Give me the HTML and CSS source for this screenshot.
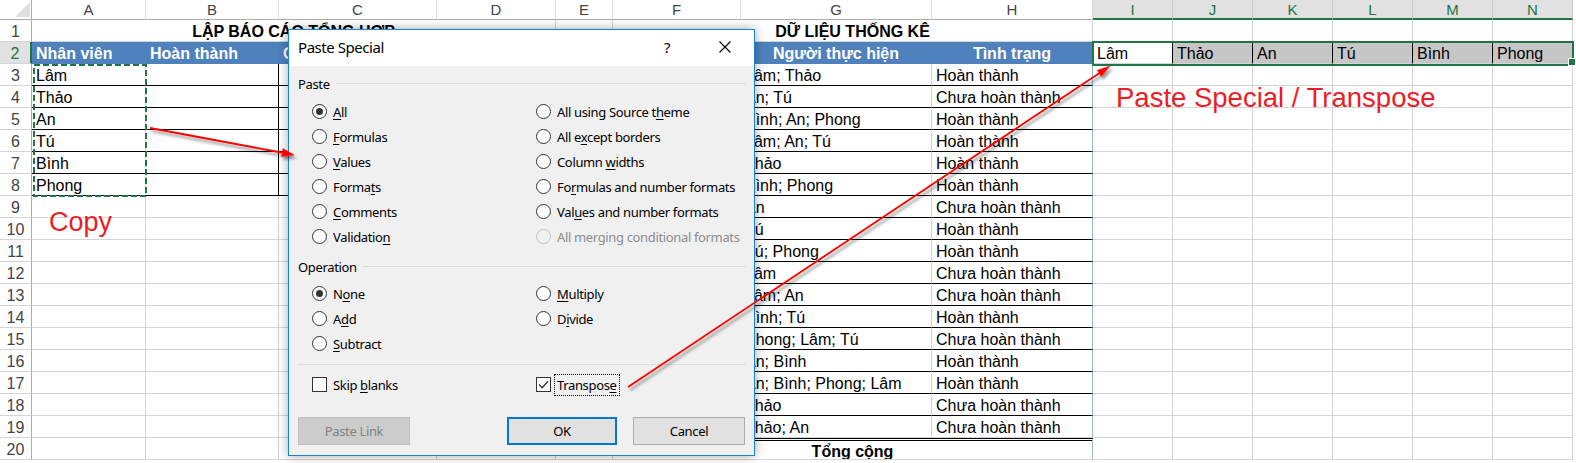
FILE: index.html
```html
<!DOCTYPE html>
<html lang="vi">
<head>
<meta charset="utf-8">
<title>Paste Special / Transpose</title>
<link rel="stylesheet" href="styles.css">
</head>
<body>
<div class="sheet">
  <div class="corner"></div>
  <div class="ch">A</div><div class="ch">B</div><div class="ch">C</div><div class="ch">D</div><div class="ch">E</div><div class="ch">F</div><div class="ch">G</div><div class="ch">H</div>
  <div class="ch sel">I</div><div class="ch sel">J</div><div class="ch sel">K</div><div class="ch sel">L</div><div class="ch sel">M</div><div class="ch sel">N</div>

  <div class="rh">1</div><div class="span4 title">LẬP BÁO CÁO TỔNG HỢP</div><div></div><div class="span3 title">DỮ LIỆU THỐNG KÊ</div><div></div><div></div><div></div><div></div><div></div><div></div>

  <div class="rh sel">2</div><div class="hd">Nhân viên</div><div class="hd">Hoàn thành</div><div class="hd">C</div><div></div><div></div><div class="hd"></div><div class="hd ctr">Người thực hiện</div><div class="hd ctr">Tình trạng</div><div class="pi">Lâm</div><div class="pj">Thảo</div><div class="pj">An</div><div class="pj">Tú</div><div class="pj">Bình</div><div class="pj">Phong</div>

  <div class="rh">3</div><div class="t">Lâm</div><div class="t br"></div><div class="t br"></div><div></div><div></div><div class="t"></div><div class="t">Lâm; Thảo</div><div class="t bl">Hoàn thành</div><div></div><div></div><div></div><div></div><div></div><div></div>
  <div class="rh">4</div><div class="t">Thảo</div><div class="t br"></div><div class="t br"></div><div></div><div></div><div class="t"></div><div class="t">An; Tú</div><div class="t bl">Chưa hoàn thành</div><div></div><div></div><div></div><div></div><div></div><div></div>
  <div class="rh">5</div><div class="t">An</div><div class="t br"></div><div class="t br"></div><div></div><div></div><div class="t"></div><div class="t">Bình; An; Phong</div><div class="t bl">Hoàn thành</div><div></div><div></div><div></div><div></div><div></div><div></div>
  <div class="rh">6</div><div class="t">Tú</div><div class="t br"></div><div class="t br"></div><div></div><div></div><div class="t"></div><div class="t">Lâm; An; Tú</div><div class="t bl">Hoàn thành</div><div></div><div></div><div></div><div></div><div></div><div></div>
  <div class="rh">7</div><div class="t">Bình</div><div class="t br"></div><div class="t br"></div><div></div><div></div><div class="t"></div><div class="t">Thảo</div><div class="t bl">Hoàn thành</div><div></div><div></div><div></div><div></div><div></div><div></div>
  <div class="rh">8</div><div class="t">Phong</div><div class="t br"></div><div class="t br"></div><div></div><div></div><div class="t"></div><div class="t">Bình; Phong</div><div class="t bl">Hoàn thành</div><div></div><div></div><div></div><div></div><div></div><div></div>
  <div class="rh">9</div><div></div><div></div><div></div><div></div><div></div><div class="t"></div><div class="t">An</div><div class="t bl">Chưa hoàn thành</div><div></div><div></div><div></div><div></div><div></div><div></div>
  <div class="rh">10</div><div></div><div></div><div></div><div></div><div></div><div class="t"></div><div class="t">Tú</div><div class="t bl">Hoàn thành</div><div></div><div></div><div></div><div></div><div></div><div></div>
  <div class="rh">11</div><div></div><div></div><div></div><div></div><div></div><div class="t"></div><div class="t">Tú; Phong</div><div class="t bl">Hoàn thành</div><div></div><div></div><div></div><div></div><div></div><div></div>
  <div class="rh">12</div><div></div><div></div><div></div><div></div><div></div><div class="t"></div><div class="t">Lâm</div><div class="t bl">Chưa hoàn thành</div><div></div><div></div><div></div><div></div><div></div><div></div>
  <div class="rh">13</div><div></div><div></div><div></div><div></div><div></div><div class="t"></div><div class="t">Lâm; An</div><div class="t bl">Chưa hoàn thành</div><div></div><div></div><div></div><div></div><div></div><div></div>
  <div class="rh">14</div><div></div><div></div><div></div><div></div><div></div><div class="t"></div><div class="t">Bình; Tú</div><div class="t bl">Hoàn thành</div><div></div><div></div><div></div><div></div><div></div><div></div>
  <div class="rh">15</div><div></div><div></div><div></div><div></div><div></div><div class="t"></div><div class="t">Phong; Lâm; Tú</div><div class="t bl">Chưa hoàn thành</div><div></div><div></div><div></div><div></div><div></div><div></div>
  <div class="rh">16</div><div></div><div></div><div></div><div></div><div></div><div class="t"></div><div class="t">An; Bình</div><div class="t bl">Hoàn thành</div><div></div><div></div><div></div><div></div><div></div><div></div>
  <div class="rh">17</div><div></div><div></div><div></div><div></div><div></div><div class="t"></div><div class="t">An; Bình; Phong; Lâm</div><div class="t bl">Hoàn thành</div><div></div><div></div><div></div><div></div><div></div><div></div>
  <div class="rh">18</div><div></div><div></div><div></div><div></div><div></div><div class="t"></div><div class="t">Thảo</div><div class="t bl">Chưa hoàn thành</div><div></div><div></div><div></div><div></div><div></div><div></div>
  <div class="rh">19</div><div></div><div></div><div></div><div></div><div></div><div></div><div>Thảo; An</div><div class="bl">Chưa hoàn thành</div><div></div><div></div><div></div><div></div><div></div><div></div>
  <div class="rh">20</div><div></div><div></div><div></div><div></div><div></div><div class="span3 total bl">Tổng cộng</div><div></div><div></div><div></div><div></div><div></div><div></div>
</div>

<svg class="marquee" width="1576" height="463" viewBox="0 0 1576 463">
  <rect x="34" y="65" width="112" height="131" fill="none" stroke="#217346" stroke-width="2" stroke-dasharray="6 3"/>
</svg>

<div class="selection"><span class="handle"></span></div>

<div class="dialog">
  <div class="dlg-title">
    <span class="dlg-name">Paste Special</span>
    <span class="dlg-help">?</span>
    <svg class="dlg-close" width="12" height="12" viewBox="0 0 12 12"><path d="M0.5 0.5L11.5 11.5M11.5 0.5L0.5 11.5" stroke="#000" stroke-width="1.1" fill="none"/></svg>
  </div>
  <div class="dlg-body">
    <div class="group"><span>Paste</span><i class="rule"></i></div>
    <div class="opts">
      <div class="opt"><span class="radio on"></span><span><u>A</u>ll</span></div>
      <div class="opt"><span class="radio"></span><span>All using Source t<u>h</u>eme</span></div>
      <div class="opt"><span class="radio"></span><span><u>F</u>ormulas</span></div>
      <div class="opt"><span class="radio"></span><span>All e<u>x</u>cept borders</span></div>
      <div class="opt"><span class="radio"></span><span><u>V</u>alues</span></div>
      <div class="opt"><span class="radio"></span><span>Column <u>w</u>idths</span></div>
      <div class="opt"><span class="radio"></span><span>Forma<u>t</u>s</span></div>
      <div class="opt"><span class="radio"></span><span>Fo<u>r</u>mulas and number formats</span></div>
      <div class="opt"><span class="radio"></span><span><u>C</u>omments</span></div>
      <div class="opt"><span class="radio"></span><span>Val<u>u</u>es and number formats</span></div>
      <div class="opt"><span class="radio"></span><span>Validatio<u>n</u></span></div>
      <div class="opt off"><span class="radio"></span><span>All merging conditional formats</span></div>
    </div>
    <div class="group g2"><span>Operation</span><i class="rule"></i></div>
    <div class="opts o2">
      <div class="opt"><span class="radio on"></span><span>N<u>o</u>ne</span></div>
      <div class="opt"><span class="radio"></span><span><u>M</u>ultiply</span></div>
      <div class="opt"><span class="radio"></span><span>A<u>d</u>d</span></div>
      <div class="opt"><span class="radio"></span><span>D<u>i</u>vide</span></div>
      <div class="opt"><span class="radio"></span><span><u>S</u>ubtract</span></div>
    </div>
    <div class="sep"></div>
    <div class="opts o3">
      <div class="opt"><span class="check"></span><span>Skip <u>b</u>lanks</span></div>
      <div class="opt"><span class="check"><svg width="13" height="13" viewBox="0 0 13 13"><path d="M2 6.5L5.2 9.8L11 3.2" stroke="#333" stroke-width="1.3" fill="none"/></svg></span><span class="focus">Transpos<u>e</u></span></div>
    </div>
    <div class="buttons">
      <span class="btn dis">Paste Link</span>
      <span class="btn ok">OK</span>
      <span class="btn cancel">Cancel</span>
    </div>
  </div>
</div>

<svg class="arrows" width="1576" height="463" viewBox="0 0 1576 463">
  <defs>
    <filter id="sh" x="-10%" y="-10%" width="130%" height="140%">
      <feDropShadow dx="2" dy="3" stdDeviation="1.5" flood-color="#000" flood-opacity="0.45"/>
    </filter>
  </defs>
  <g filter="url(#sh)" fill="#ff0000" stroke="#ff0000">
    <line x1="150" y1="128" x2="284" y2="153" stroke-width="1.8"/>
    <polygon points="294,155 283,148.6 281.6,156.5" stroke-width="0.5"/>
    <line x1="628" y1="387" x2="1101" y2="72" stroke-width="1.8"/>
    <polygon points="1110,66 1097.3,70.3 1101.3,76.3" stroke-width="0.5"/>
  </g>
</svg>

<div class="note copy">Copy</div>
<div class="note paste">Paste Special / Transpose</div>
</body>
</html>
```

FILE: styles.css
```css
* { box-sizing: border-box; margin: 0; padding: 0; }
html, body { width: 1576px; height: 463px; overflow: hidden; background: #fff; }
body {
  position: relative;
  font-family: "Liberation Sans", Arial, sans-serif;
  font-size: 16px;
  color: #000;
}

/* ---------- spreadsheet ---------- */
.sheet {
  display: grid;
  grid-template-columns: 32px 114px 133px 158px 119px 57px 128px 191px 161px repeat(6, 80px);
  grid-template-rows: 20px repeat(20, 22px);
}
.sheet > div {
  border-right: 1px solid #d4d4d4;
  border-bottom: 1px solid #d4d4d4;
  padding: 3px 4px 0;
  line-height: 18px;
  white-space: nowrap;
  overflow: hidden;
}
.sheet > .corner {
  position: relative;
  border-right-color: #ababab;
  border-bottom-color: #ababab;
}
.corner::after {
  content: "";
  position: absolute;
  right: 1px;
  bottom: 2px;
  border-style: solid;
  border-width: 0 0 15px 15px;
  border-color: transparent transparent #dfdfdf transparent;
}
.sheet > .ch {
  text-align: center;
  font-size: 15px;
  color: #444;
  padding: 1px 0 0;
  border-right-color: #dedede;
  border-bottom-color: #ababab;
}
.sheet > .ch.sel {
  background: #e1e1e1;
  color: #217346;
  border-right-color: #c8c8c8;
  border-bottom: 2px solid #217346;
}
.sheet > .rh {
  text-align: center;
  color: #444;
  padding: 3px 0 0;
  border-right-color: #ababab;
}
.sheet > .rh.sel {
  background: #e1e1e1;
  color: #217346;
  border-right: 2px solid #217346;
}
.span4 { grid-column: span 4; }
.span3 { grid-column: span 3; }
.sheet > .title { font-weight: bold; text-align: center; }
.sheet > .hd {
  background: #4f81bd;
  color: #fff;
  font-weight: bold;
  border-right-color: #4f81bd;
  border-bottom-color: #4f81bd;
}
.sheet > .ctr { text-align: center; }
.sheet > .t { border-bottom-color: #000; }
.sheet > .br { border-right-color: #000; }
.sheet > .bl { border-right-color: #9db3d6; }
.sheet > .total {
  font-weight: bold;
  text-align: center;
  border-top: 3px double #000;
  padding-top: 2px;
}
.sheet > .pi { border-right-color: #000; }
.sheet > .pj { background: #c6c6c6; border-right-color: #000; }

/* ---------- overlays on the sheet ---------- */
.marquee, .arrows {
  position: absolute;
  left: 0;
  top: 0;
  pointer-events: none;
}
.selection {
  position: absolute;
  left: 1092px;
  top: 41px;
  width: 482px;
  height: 25px;
  border: 2px solid #217346;
}
.handle {
  position: absolute;
  right: -3px;
  bottom: -1px;
  width: 6px;
  height: 6px;
  background: #217346;
  outline: 1px solid #fff;
}
.note {
  position: absolute;
  font-family: "Liberation Sans", Arial, sans-serif;
  font-size: 27px;
  line-height: 27px;
  color: #ee1c25;
  white-space: nowrap;
}
.note.copy { left: 49px; top: 209px; }
.note.paste { left: 1116px; top: 84px; font-size: 27.5px; }

/* ---------- dialog ---------- */
.dialog {
  position: absolute;
  left: 288px;
  top: 29px;
  width: 467px;
  height: 427px;
  border: 1px solid #1883d7;
  background: #f0f0f0;
  box-shadow: 0 0 10px rgba(0, 0, 0, 0.35);
  font-family: "Noto Sans", "Open Sans", sans-serif;
  font-size: 13px;
  letter-spacing: -0.35px;
  color: #000;
}
.dlg-title {
  height: 36px;
  background: #fff;
  display: flex;
  align-items: center;
  padding: 0 0 2px 9px;
}
.dlg-name { flex: 1; font-size: 15px; letter-spacing: -0.45px; }
.dlg-help { width: 12px; text-align: center; font-size: 15px; margin-right: 46px; }
.dlg-close { margin-right: 23px; }
.dlg-body { padding: 0 9px; }
.group {
  display: flex;
  align-items: center;
  height: 18px;
  margin-top: 9px;
}
.group .rule {
  flex: 1;
  height: 1px;
  background: #dcdcdc;
  margin: 0 -1px 2px 6px;
}
.opts {
  display: grid;
  grid-template-columns: 224px 1fr;
  grid-auto-rows: 25px;
  margin: 6px 0 0 14px;
}
.opts.o2 { margin-top: 5px; }
.opts.o3 { margin-top: 7px; }
.opt {
  display: flex;
  align-items: center;
  gap: 6px;
  white-space: nowrap;
}
.opt u { text-underline-offset: 2px; }
.opt.off { color: #8c8c8c; }
.radio {
  position: relative;
  flex: none;
  width: 15px;
  height: 15px;
  border: 1px solid #333;
  border-radius: 50%;
  background: #fff;
}
.radio.on::after {
  content: "";
  position: absolute;
  inset: 3px;
  border-radius: 50%;
  background: #333;
}
.opt.off .radio { border-color: #c4c4c4; background: #f0f0f0; }
.check {
  flex: none;
  width: 15px;
  height: 15px;
  border: 1px solid #333;
  background: #fff;
  display: flex;
}
.focus {
  outline: 1px dotted #000;
  padding: 1px 2px;
  margin-left: -2px;
}
.sep {
  height: 1px;
  background: #dcdcdc;
  margin: 8px -1px 0 0;
}
.buttons {
  display: flex;
  margin-top: 20px;
  height: 28px;
}
.btn {
  display: flex;
  align-items: center;
  justify-content: center;
  height: 28px;
  background: #e1e1e1;
  border: 1px solid #adadad;
  padding-bottom: 1px;
}
.btn.dis { width: 112px; background: #cccccc; border-color: #bfbfbf; color: #838383; }
.btn.ok { width: 110px; margin-left: auto; border: 2px solid #0078d7; }
.btn.cancel { width: 112px; margin-left: 16px; }
```
